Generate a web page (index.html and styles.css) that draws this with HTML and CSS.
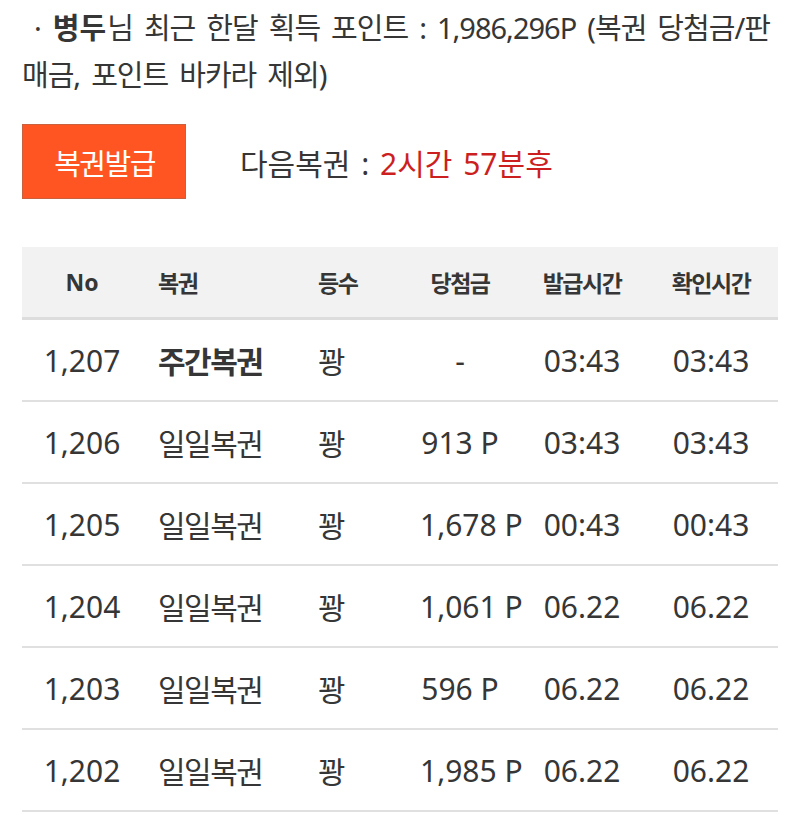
FILE: index.html
```html
<!DOCTYPE html>
<html lang="ko">
<head>
<meta charset="utf-8">
<link rel="stylesheet" href="styles.css">
</head>
<body>
<div class="page">
  <p class="summary">· <b>병두</b>님 최근 한달 획득 포인트 : 1,986,296P (복권 당첨금/판매금, 포인트 바카라 제외)</p>
  <div class="issue">
    <button class="btn">복권발급</button>
    <div class="next">다음복권 : <span class="red">2시간 57분후</span></div>
  </div>
  <div class="table">
    <div class="row head">
      <div class="c1">No</div><div class="c2">복권</div><div class="c3">등수</div><div class="c4">당첨금</div><div class="c5">발급시간</div><div class="c6">확인시간</div>
    </div>
    <div class="row">
      <div class="c1">1,207</div><div class="c2 strong">주간복권</div><div class="c3">꽝</div><div class="c4">-</div><div class="c5">03:43</div><div class="c6">03:43</div>
    </div>
    <div class="row">
      <div class="c1">1,206</div><div class="c2">일일복권</div><div class="c3">꽝</div><div class="c4">913 P</div><div class="c5">03:43</div><div class="c6">03:43</div>
    </div>
    <div class="row">
      <div class="c1">1,205</div><div class="c2">일일복권</div><div class="c3">꽝</div><div class="c4">1,678 P</div><div class="c5">00:43</div><div class="c6">00:43</div>
    </div>
    <div class="row">
      <div class="c1">1,204</div><div class="c2">일일복권</div><div class="c3">꽝</div><div class="c4">1,061 P</div><div class="c5">06.22</div><div class="c6">06.22</div>
    </div>
    <div class="row">
      <div class="c1">1,203</div><div class="c2">일일복권</div><div class="c3">꽝</div><div class="c4">596 P</div><div class="c5">06.22</div><div class="c6">06.22</div>
    </div>
    <div class="row">
      <div class="c1">1,202</div><div class="c2">일일복권</div><div class="c3">꽝</div><div class="c4">1,985 P</div><div class="c5">06.22</div><div class="c6">06.22</div>
    </div>
  </div>
</div>
</body>
</html>
```
FILE: styles.css
```css
* { box-sizing: border-box; }
html, body { margin: 0; padding: 0; background: #fff; }
body {
  font-family: "Noto Sans", "Noto Sans CJK KR", sans-serif;
  color: #363636;
}
.page { padding: 4px 22px 0 22px; }
.summary {
  margin: 0;
  font-size: 29px;
  line-height: 47px;
  letter-spacing: -1px;
  word-spacing: 4.5px;
  text-indent: 12px;
}
.summary b { font-weight: 700; letter-spacing: 0; margin: 0 1px; }
.issue {
  display: flex;
  align-items: center;
  margin-top: 26px;
}
.btn {
  width: 164px;
  height: 75px;
  background: #ff5522;
  border: 1px solid #c9603e;
  color: #fff;
  font-family: inherit;
  font-size: 29px;
  letter-spacing: -1.5px;
  padding: 0 0 0 1px;
}
.next {
  margin-left: 54px;
  font-size: 30px;
  word-spacing: 3px;
}
.red { color: #cc1f1f; }
.table { margin-top: 48px; }
.row {
  display: grid;
  grid-template-columns: 120px 158px 100px 120px 124px 134px;
  align-items: center;
  height: 82px;
  border-bottom: 2px solid #e0e0e0;
  font-size: 30px;
}
.row.head {
  height: 73px;
  background: #f2f2f2;
  border-bottom: 3px solid #dddddd;
  font-size: 23px;
  font-weight: 700;
}
.c1 { text-align: center; }
.c2, .c3 { letter-spacing: -1.5px; white-space: nowrap; }
.c2 { padding-left: 16px; }
.c3 { padding-left: 18px; }
.head .c2, .head .c3, .head .c4, .head .c5, .head .c6 { letter-spacing: -1.5px; }
.c4 { text-align: center; padding: 0 20px; white-space: nowrap; }
.c5, .c6 { text-align: center; }
.strong { font-weight: 700; }
```
